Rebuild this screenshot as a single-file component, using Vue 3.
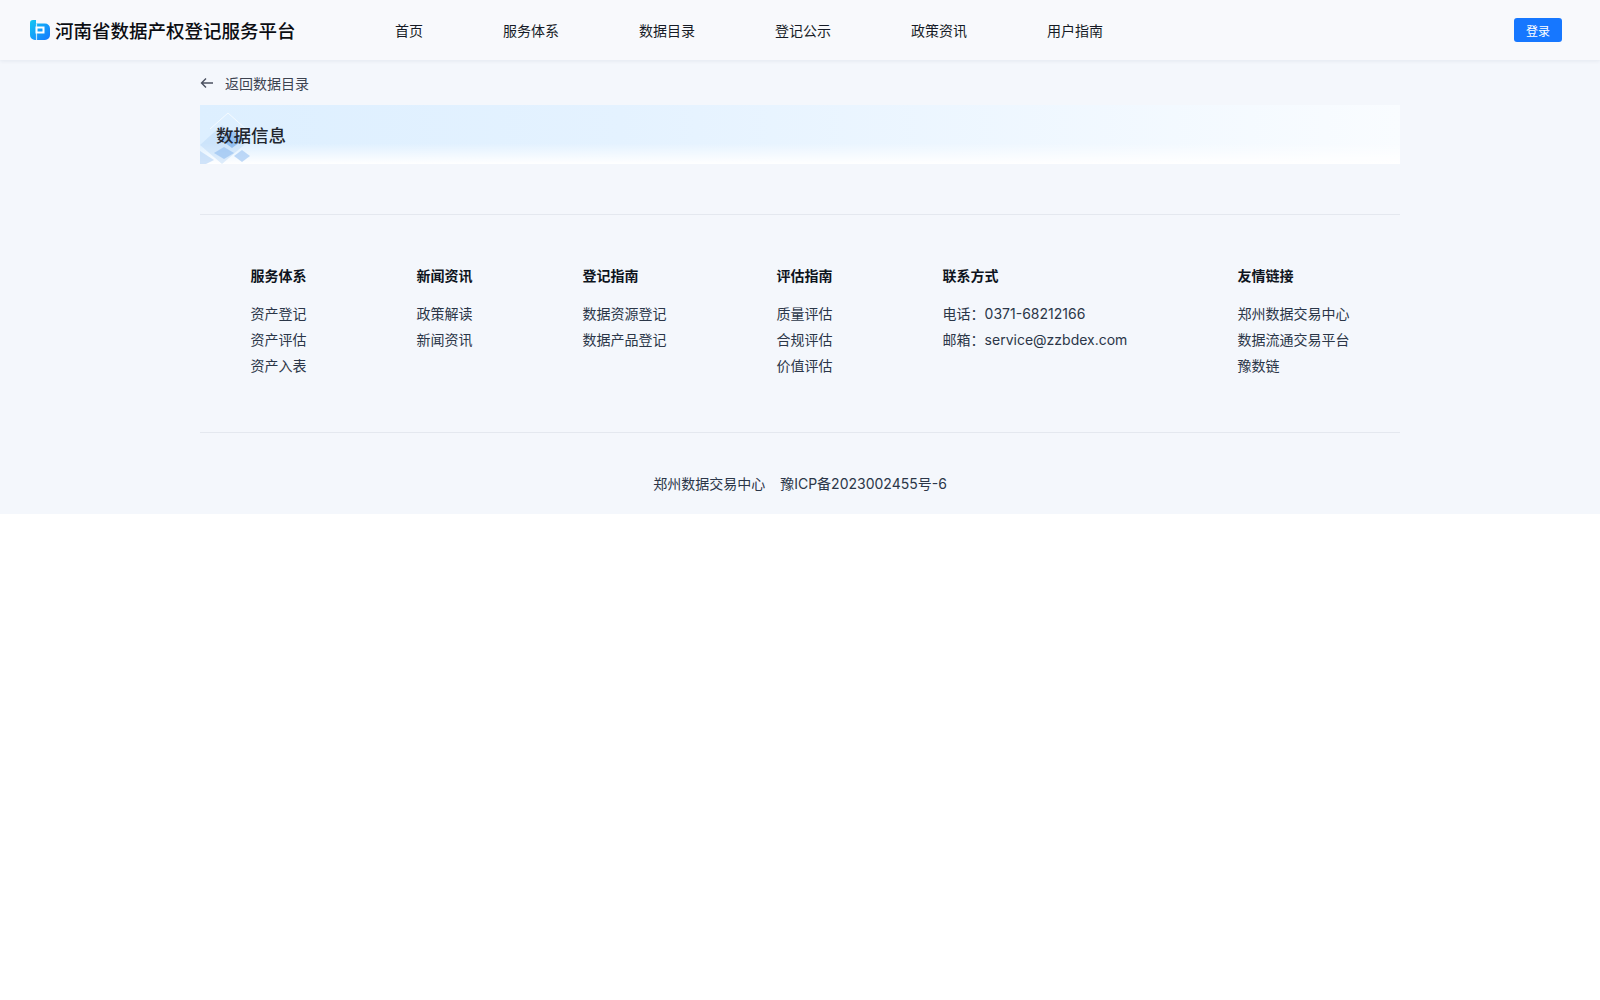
<script setup>
const navItems = ["首页", "服务体系", "数据目录", "登记公示", "政策资讯", "用户指南"];

const footerCols = [
  { title: "服务体系", links: ["资产登记", "资产评估", "资产入表"] },
  { title: "新闻资讯", links: ["政策解读", "新闻资讯"] },
  { title: "登记指南", links: ["数据资源登记", "数据产品登记"] },
  { title: "评估指南", links: ["质量评估", "合规评估", "价值评估"] },
  { title: "联系方式", links: ["电话：0371-68212166", "邮箱：service@zzbdex.com"] },
  { title: "友情链接", links: ["郑州数据交易中心", "数据流通交易平台", "豫数链"] },
];
</script>

<template>
  <div class="page">
    <header class="header">
      <div class="brand">
        <svg class="logo" width="20" height="20" viewBox="0 0 20 20">
          <defs>
            <linearGradient id="logoFill" x1="0" y1="0" x2="1" y2="1">
              <stop offset="0" stop-color="#12c8f2" />
              <stop offset="1" stop-color="#1677ff" />
            </linearGradient>
          </defs>
          <path
            d="M3 0H6V3.500H15A5 5 0 0 1 20 8.500V15A5 5 0 0 1 15 20H5A5 5 0 0 1 0 15V3A3 3 0 0 1 3 0Z"
            fill="url(#logoFill)"
          />
          <path d="M6.500 7.500H13.500V12.500H6.500V7.500Z" fill="none" stroke="#fff" stroke-width="2" />
          <path d="M6.500 3.500V20" stroke="#fff" stroke-width="1.200" opacity="0.75" />
        </svg>
        <span class="brand-name">河南省数据产权登记服务平台</span>
      </div>
      <nav class="nav">
        <a v-for="item in navItems" :key="item" class="nav-item">{{ item }}</a>
      </nav>
      <button class="login">登录</button>
    </header>

    <main class="content">
      <div class="back">
        <svg width="14" height="14" viewBox="0 0 14 14" fill="none">
          <path d="M13 7H1.500M6 2.500L1.500 7L6 11.500" stroke="#4b5160" stroke-width="1.400" />
        </svg>
        <span>返回数据目录</span>
      </div>
      <section class="banner">
        <svg class="banner-art" width="70" height="59" viewBox="0 0 70 59">
          <path d="M0 40L22 20L44 40L22 59Z" fill="#b9d6f7" opacity="0.45" />
          <path d="M20 34L32 25L44 34L32 43Z" fill="#6ea6ea" opacity="0.6" />
          <path d="M14 48L24 42L34 48L24 54Z" fill="#8fbcf0" opacity="0.6" />
          <path d="M34 51L42 45L50 51L42 57Z" fill="#a5c9f3" opacity="0.7" />
          <path d="M0 46L14 55L6 59H0Z" fill="#bcd7f6" opacity="0.7" />
          <path d="M10 24L28 8L46 24" fill="none" stroke="#fff" stroke-width="1" opacity="0.7" />
        </svg>
        <h2 class="banner-title">数据信息</h2>
      </section>
    </main>

    <footer class="footer">
      <div class="footer-cols">
        <div v-for="col in footerCols" :key="col.title" class="footer-col">
          <h4 class="col-title">{{ col.title }}</h4>
          <p v-for="link in col.links" :key="link" class="col-link">{{ link }}</p>
        </div>
      </div>
      <div class="copyright">
        <span>郑州数据交易中心</span>
        <span>豫ICP备2023002455号-6</span>
      </div>
    </footer>
  </div>
</template>

<style scoped>
.page {
  background: #f4f7fc;
  font-family: Inter, "Noto Sans CJK SC", sans-serif;
  color: #2b3648;
  height: 514px;
}

.header {
  height: 60px;
  box-sizing: border-box;
  padding: 0 38px 0 30px;
  display: flex;
  align-items: center;
  background: #f8f9fc;
  box-shadow: 0 1px 4px rgba(30, 50, 90, 0.08);
}

.brand {
  display: flex;
  align-items: center;
  gap: 5px;
  width: 365px;
}

.logo {
  flex: none;
}

.brand-name {
  font-size: 18.500px;
  font-weight: 500;
  color: #0b0d12;
  white-space: nowrap;
}

.nav {
  display: flex;
  gap: 80px;
  flex: 1;
}

.nav-item {
  font-size: 14px;
  color: #161b26;
}

.login {
  width: 48px;
  height: 24px;
  border: none;
  border-radius: 3px;
  background: #1677ff;
  color: #fff;
  font-family: inherit;
  font-size: 12px;
  padding: 0;
}

.content {
  width: 1200px;
  margin: 0 auto;
  border-bottom: 1px solid #e4e8ef;
  padding-bottom: 50px;
}

.back {
  height: 45px;
  display: flex;
  align-items: center;
  gap: 11px;
  font-size: 14px;
  color: #3d4350;
}

.banner {
  position: relative;
  height: 59px;
  display: flex;
  align-items: center;
  padding-left: 16px;
  background:
    linear-gradient(to bottom, rgba(255, 255, 255, 0) 65%, #fff 100%),
    linear-gradient(to right, #ddefff 0%, #e4f2ff 35%, #f9fcff 100%);
}

.banner-art {
  position: absolute;
  left: 0;
  top: 0;
}

.banner-title {
  position: relative;
  margin: 0;
  font-size: 17.500px;
  font-weight: 500;
  color: #22262e;
}

.footer-cols {
  width: 1200px;
  margin: 0 auto;
  box-sizing: border-box;
  padding: 50px 0 50px;
  height: 218px;
  display: flex;
  justify-content: center;
  gap: 110px;
  border-bottom: 1px solid #e4e8ef;
}

.col-title {
  margin: 0 0 14px;
  font-size: 14px;
  line-height: 22px;
  font-weight: 600;
  color: #0e1420;
}

.col-link {
  margin: 0;
  font-size: 14px;
  line-height: 26px;
  white-space: nowrap;
}

.copyright {
  display: flex;
  justify-content: center;
  gap: 15px;
  margin-top: 40px;
  font-size: 14px;
  line-height: 22px;
}
</style>

<style>
body {
  background: #fff;
}
</style>
